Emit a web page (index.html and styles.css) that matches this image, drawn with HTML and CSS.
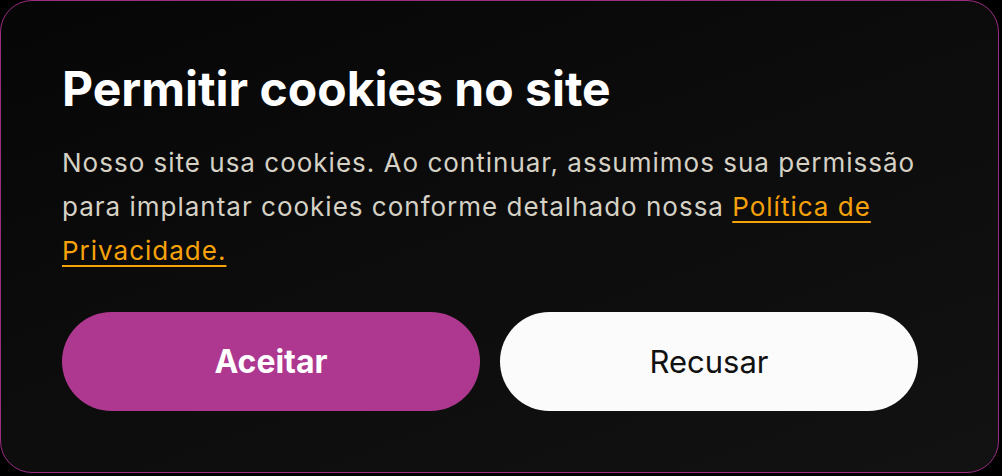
FILE: index.html
```html
<!DOCTYPE html>
<html>
<head>
	<meta charset="utf-8">
	<title>Permitir cookies</title>
	<link rel="stylesheet" href="styles.css">
</head>
<body>
	<div class="cookie-box">
		<h1 class="cookie-title">Permitir cookies no site</h1>
		<p class="cookie-text">Nosso site usa cookies. Ao continuar, assumimos sua permissão para implantar cookies conforme detalhado nossa <a href="javascript:;">Política de Privacidade.</a></p>
		<div class="cookie-btns">
			<a href="javascript:;" class="btn btn-accept">Aceitar</a>
			<a href="javascript:;" class="btn btn-refuse">Recusar</a>
		</div>
	</div>
</body>
</html>
```

FILE: styles.css
```css
html,body{margin: 0;padding: 0;background: #000000;}
a{text-decoration: none;}
.cookie-box{box-sizing: border-box;width: 999px;height: 473px;border: 1px solid #9a2c84;border-radius: 32px;background: linear-gradient(160deg,#060606 0%,#0d0d0d 55%,#121212 100%);padding: 59px 62px 0 61px;font-family: Inter, "Noto Sans", sans-serif;}
.cookie-title{margin: 0;font-size: 48px;font-weight: 700;line-height: 58px;color: #ffffff;}
.cookie-text{margin: 23px 0 0 0;font-size: 26px;line-height: 44px;letter-spacing: 1px;color: #d5d1c5;}
.cookie-text a{color: #f7a20a;text-decoration: underline;text-underline-offset: 5px;text-decoration-thickness: 2px;}
.cookie-btns{display: flex;gap: 20px;margin-top: 39px;}
.btn{display: flex;align-items: center;justify-content: center;width: 418px;height: 99px;border-radius: 50px;font-size: 31px;}
.btn-accept{background: #ae3890;color: #ffffff;font-weight: 700;font-size: 32px;}
.btn-refuse{background: #fbfbfb;color: #111111;}
```
